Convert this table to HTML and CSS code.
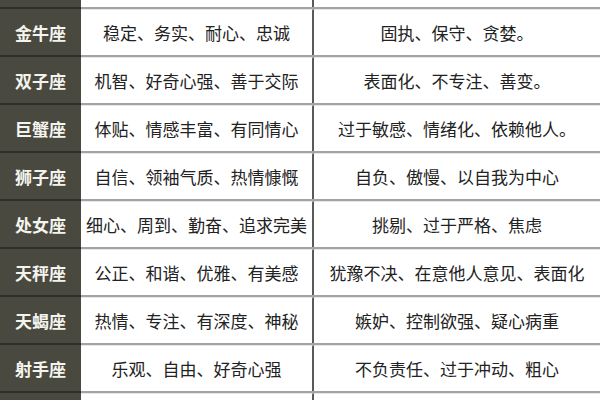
FILE: index.html
```html
<!DOCTYPE html>
<html lang="zh">
<head>
<meta charset="utf-8">
<link rel="stylesheet" href="styles.css">
</head>
<body>
<div class="table">
  <div class="row top"><div class="sign"></div><div class="cell mid"></div><div class="cell"></div></div>
  <div class="row"><div class="sign">金牛座</div><div class="cell mid">稳定、务实、耐心、忠诚</div><div class="cell">固执、保守、贪婪。</div></div>
  <div class="row"><div class="sign">双子座</div><div class="cell mid">机智、好奇心强、善于交际</div><div class="cell">表面化、不专注、善变。</div></div>
  <div class="row"><div class="sign">巨蟹座</div><div class="cell mid">体贴、情感丰富、有同情心</div><div class="cell">过于敏感、情绪化、依赖他人。</div></div>
  <div class="row"><div class="sign">狮子座</div><div class="cell mid">自信、领袖气质、热情慷慨</div><div class="cell">自负、傲慢、以自我为中心</div></div>
  <div class="row"><div class="sign">处女座</div><div class="cell mid">细心、周到、勤奋、追求完美</div><div class="cell">挑剔、过于严格、焦虑</div></div>
  <div class="row"><div class="sign">天秤座</div><div class="cell mid">公正、和谐、优雅、有美感</div><div class="cell">犹豫不决、在意他人意见、表面化</div></div>
  <div class="row"><div class="sign">天蝎座</div><div class="cell mid">热情、专注、有深度、神秘</div><div class="cell">嫉妒、控制欲强、疑心病重</div></div>
  <div class="row"><div class="sign">射手座</div><div class="cell mid">乐观、自由、好奇心强</div><div class="cell">不负责任、过于冲动、粗心</div></div>
  <div class="row bottom"><div class="sign"></div><div class="cell mid"></div><div class="cell"></div></div>
</div>
</body>
</html>
```
FILE: styles.css
```css
html, body {
  margin: 0;
  padding: 0;
  background: #ffffff;
  width: 600px;
  height: 400px;
  overflow: hidden;
}
.table {
  display: flex;
  flex-direction: column;
  font-family: "Noto Sans CJK SC", "Noto Sans", sans-serif;
}
.row {
  display: grid;
  grid-template-columns: 81px 233px 1fr;
  height: 48px;
  border-bottom: 2px solid #a3a3a3;
  box-sizing: border-box;
}
.row.top {
  height: 9px;
}
.row.bottom {
  height: 20px;
  border-bottom: none;
}
.sign {
  background: #4a493f;
  color: #f4f4ee;
  font-size: 17px;
  font-weight: bold;
  display: flex;
  align-items: center;
  justify-content: center;
  margin-bottom: -2px;
  border-bottom: 2px solid #2f2e28;
}
.row.bottom .sign {
  border-bottom: none;
}
.cell {
  display: flex;
  align-items: center;
  justify-content: center;
  font-size: 17px;
  color: #222222;
  white-space: nowrap;
  border-top: 1px solid #e6e6e6;
}
.mid {
  border-right: 2px solid #5a5a5a;
}
.row.top .cell {
  border-top: none;
}
```
